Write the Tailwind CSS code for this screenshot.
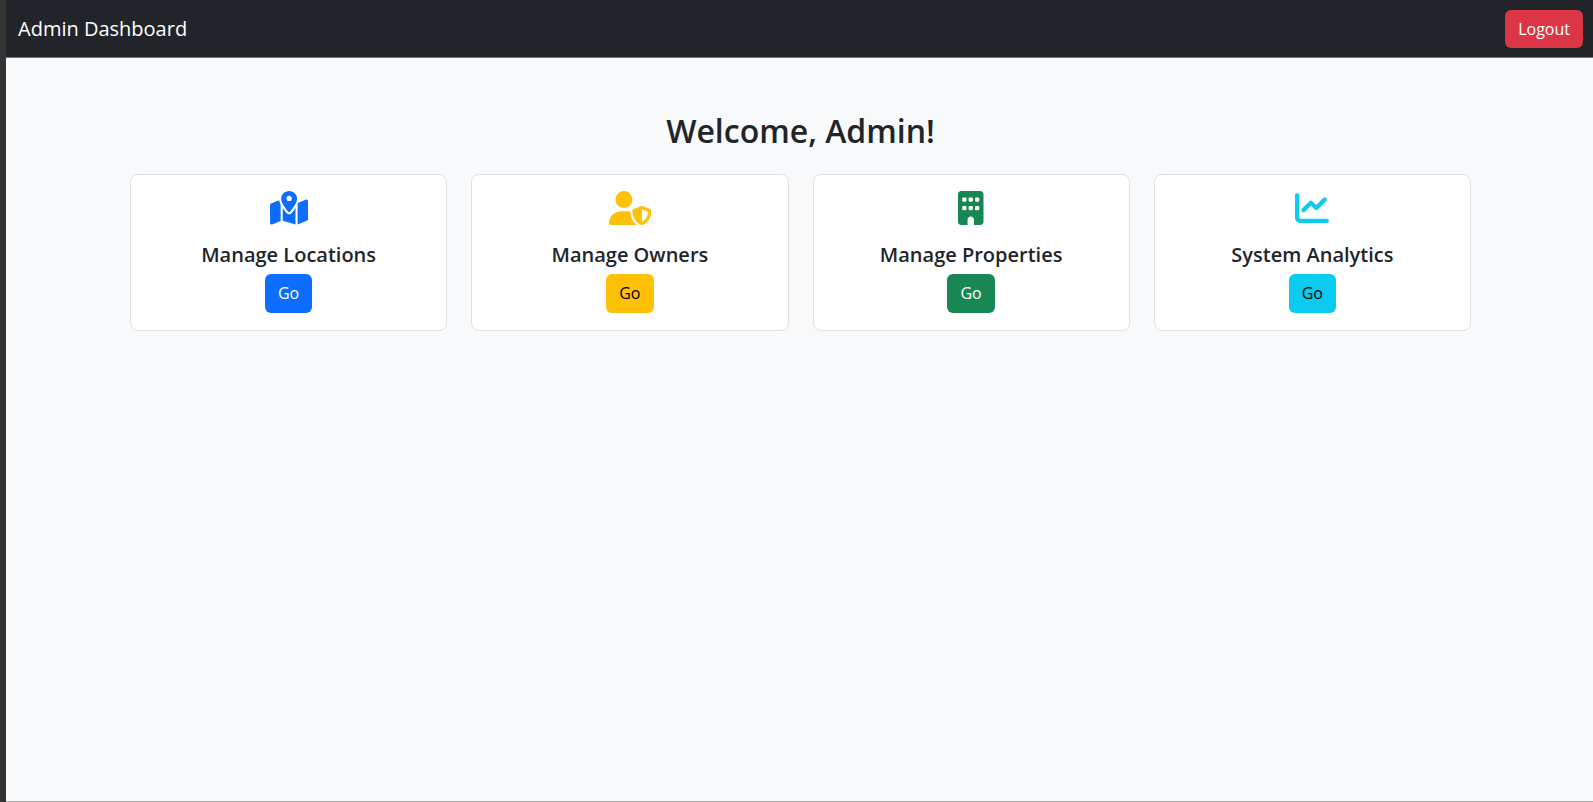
<!DOCTYPE html>
<html lang="en">
<head>
<meta charset="utf-8">
<meta name="viewport" content="width=device-width, initial-scale=1">
<title>Admin Dashboard</title>
<script src="https://cdn.jsdelivr.net/npm/@tailwindcss/browser@4"></script>
</head>
<body class="flex min-h-screen flex-col border-l-6 border-l-[#333333] bg-[#f8f9fa] font-['Open_Sans','Noto_Sans',sans-serif] text-base text-[#212529]">
  <header class="flex items-center justify-between border-b border-[#75787b] bg-[#212529] pt-[10px] pr-[10px] pb-[9px] pl-3">
    <a href="#" class="text-[20px] leading-[30px] text-white">Admin Dashboard</a>
    <button type="button" class="rounded-md bg-[#dc3545] px-[13px] py-[7px] leading-6 text-white">Logout</button>
  </header>
  <main class="mx-auto w-full max-w-[1343px] grow pt-[51px] pl-0.5">
    <h1 class="mb-[21px] text-center text-[32px] leading-[44px] font-semibold">Welcome, Admin!</h1>
    <div class="grid grid-cols-1 gap-6 sm:grid-cols-2 lg:grid-cols-4">
      <section class="flex flex-col items-center rounded-lg border border-[#dfe0e1] bg-white px-4 pt-4 pb-[17px]">
        <svg class="mb-[15px] h-[34px] fill-[#0d6efd]" viewBox="0 0 576 512" aria-hidden="true"><path d="M408 120c0 54.600-73.100 151.900-105.200 192c-7.700 9.600-22 9.600-29.600 0C241.100 271.900 168 174.600 168 120C168 53.700 221.700 0 288 0s120 53.700 120 120zm8 80.400c3.500-6.900 6.700-13.800 9.600-20.600c.5-1.200 1-2.500 1.500-3.700l116-46.400C558.900 123.400 576 135 576 152V422.800c0 9.800-6 18.600-15.100 22.300L416 503V200.400zM137.600 138.300c2.400 14.100 7.200 28.300 12.800 41.500c2.900 6.800 6.100 13.700 9.600 20.600V451.800L32.900 502.700C17.100 509 0 497.400 0 480.400V209.600c0-9.800 6-18.600 15.100-22.300l122.600-49zM327.800 332c13.900-17.400 35.700-45.700 56.200-77V504.300L192 449.400V255c20.500 31.300 42.300 59.600 56.200 77c20.500 25.600 59.100 25.600 79.600 0zM288 152a40 40 0 1 0 0-80 40 40 0 1 0 0 80z"/></svg>
        <h2 class="mb-1 text-[20px] leading-[30px] font-semibold">Manage Locations</h2>
        <button type="button" aria-label="Go: Manage Locations" class="rounded-md bg-[#0d6efd] px-[13px] py-[7px] leading-[25px] text-white">Go</button>
      </section>
      <section class="flex flex-col items-center rounded-lg border border-[#dfe0e1] bg-white px-4 pt-4 pb-[17px]">
        <svg class="mb-[15px] h-[34px] fill-[#ffc107]" viewBox="0 0 640 512" aria-hidden="true"><path d="M224 256A128 128 0 1 0 224 0a128 128 0 1 0 0 256zm-45.700 48C79.800 304 0 383.800 0 482.300C0 498.700 13.300 512 29.700 512H418.300c1.800 0 3.500-.2 5.300-.5c-76.300-55.100-99.800-141-103.100-200.200c-16.100-4.800-33.100-7.300-50.700-7.300H178.300zm308.800-78.300l-120 48C358 277.400 352 286.200 352 296c0 63.300 25.900 168.800 134.800 214.200c5.900 2.500 12.600 2.500 18.500 0C614.100 464.800 640 359.300 640 296c0-9.800-6-18.600-15.100-22.300l-120-48c-5.700-2.300-12.100-2.300-17.800 0zM591.400 312c-3.900 50.700-27.200 116.700-95.400 149.700V273.800L591.400 312z"/></svg>
        <h2 class="mb-1 text-[20px] leading-[30px] font-semibold">Manage Owners</h2>
        <button type="button" aria-label="Go: Manage Owners" class="rounded-md bg-[#ffc107] px-[13px] py-[7px] leading-[25px] text-black">Go</button>
      </section>
      <section class="flex flex-col items-center rounded-lg border border-[#dfe0e1] bg-white px-4 pt-4 pb-[17px]">
        <svg class="mb-[15px] h-[34px] fill-[#198754]" viewBox="0 0 384 512" aria-hidden="true"><path fill-rule="evenodd" d="M48 0C21.500 0 0 21.500 0 48V464c0 26.500 21.500 48 48 48h96V432c0-26.500 21.500-48 48-48s48 21.500 48 48v80h96c26.500 0 48-21.500 48-48V48c0-26.500-21.500-48-48-48H48zM80 224h32a16 16 0 0 1 16 16v32a16 16 0 0 1-16 16H80a16 16 0 0 1-16-16v-32a16 16 0 0 1 16-16zM176 224h32a16 16 0 0 1 16 16v32a16 16 0 0 1-16 16h-32a16 16 0 0 1-16-16v-32a16 16 0 0 1 16-16zM272 224h32a16 16 0 0 1 16 16v32a16 16 0 0 1-16 16h-32a16 16 0 0 1-16-16v-32a16 16 0 0 1 16-16zM80 96h32a16 16 0 0 1 16 16v32a16 16 0 0 1-16 16H80a16 16 0 0 1-16-16v-32a16 16 0 0 1 16-16zM176 96h32a16 16 0 0 1 16 16v32a16 16 0 0 1-16 16h-32a16 16 0 0 1-16-16v-32a16 16 0 0 1 16-16zM272 96h32a16 16 0 0 1 16 16v32a16 16 0 0 1-16 16h-32a16 16 0 0 1-16-16v-32a16 16 0 0 1 16-16z"/></svg>
        <h2 class="mb-1 text-[20px] leading-[30px] font-semibold">Manage Properties</h2>
        <button type="button" aria-label="Go: Manage Properties" class="rounded-md bg-[#198754] px-[13px] py-[7px] leading-[25px] text-white">Go</button>
      </section>
      <section class="flex flex-col items-center rounded-lg border border-[#dfe0e1] bg-white px-4 pt-4 pb-[17px]">
        <svg class="mb-[15px] h-[34px] fill-[#0dcaf0]" viewBox="0 0 512 512" aria-hidden="true"><path d="M64 64c0-17.700-14.300-32-32-32S0 46.300 0 64V400c0 44.200 35.800 80 80 80H480c17.700 0 32-14.300 32-32s-14.300-32-32-32H80c-8.800 0-16-7.200-16-16V64zm406.600 86.600c12.500-12.500 12.500-32.800 0-45.300s-32.800-12.500-45.300 0L320 210.700l-57.400-57.400c-12.500-12.500-32.800-12.500-45.300 0l-112 112c-12.500 12.500-12.500 32.800 0 45.300s32.800 12.500 45.300 0L240 221.300l57.400 57.400c12.500 12.500 32.800 12.500 45.300 0l128-128z"/></svg>
        <h2 class="mb-1 text-[20px] leading-[30px] font-semibold">System Analytics</h2>
        <button type="button" aria-label="Go: System Analytics" class="rounded-md bg-[#0dcaf0] px-[13px] py-[7px] leading-[25px] text-black">Go</button>
      </section>
    </div>
  </main>
  <div class="h-px bg-[#a9a9a9]"></div>
</body>
</html>
